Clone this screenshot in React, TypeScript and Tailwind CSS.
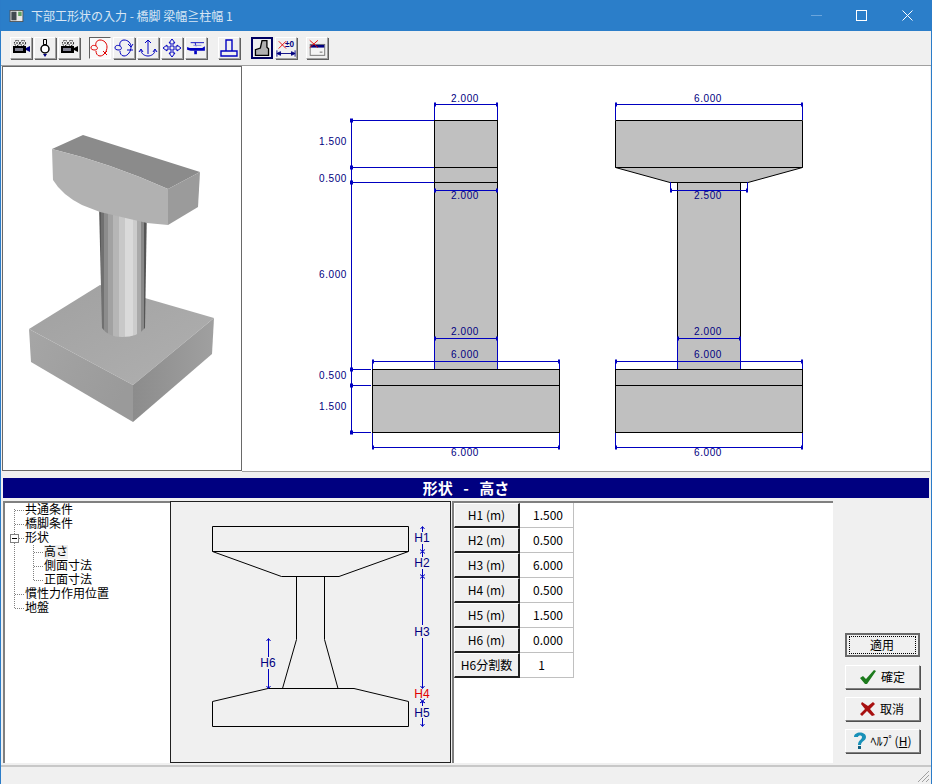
import type { ReactNode } from "react";

const BLUE = "#0000c0";
const NAVY = "#000080";

function Camera({ flip }: { flip?: boolean }) {
  return (
    <svg width="20" height="18" viewBox="0 0 20 18">
      <g fill="#000">
        <circle cx="6" cy="4" r="2.6" fill="none" stroke="#000" strokeDasharray="1.5 1" />
        <circle cx="12" cy="4" r="2.6" fill="none" stroke="#000" strokeDasharray="1.5 1" />
        <circle cx="6" cy="4" r="0.8" />
        <circle cx="12" cy="4" r="0.8" />
        <rect x="2" y="7" width="13" height="7" />
        <path d="M15 9l4-2v6l-4-2z" fill={flip ? "#000" : NAVY} />
      </g>
      <rect x="4" y="9" width="8" height="3" fill="#808090" />
    </svg>
  );
}

function Lens() {
  return (
    <svg width="14" height="20" viewBox="0 0 14 20">
      <path d="M5.5 1.5h3v5h-3z" fill="none" stroke="#000" />
      <circle cx="7" cy="11" r="4" fill="#fff" stroke="#000" strokeWidth="1.5" />
      <path d="M5 16h4l-2 3z" fill={NAVY} />
    </svg>
  );
}

function Rotate({ color, spin }: { color: string; spin?: boolean }) {
  return (
    <svg width="20" height="20" viewBox="0 0 20 20" fill="none" stroke={color}>
      <path d="M10 2c4 0 7 3 7 7 0 4-3 9-7 9-3 0-4-3-4-5" />
      <path d="M10 2C7 2 5 5 6 8" />
      {spin ? (
        <path d="M1 10c0-3 3-3 5-2s2 4-1 4-4-1-4-2zM13 13l4 4M17 13l-4 4" />
      ) : (
        <path d="M1 10c0-3 3-3 5-2s2 4-1 4-4-1-4-2zM14 6l3 3 2-3M13 12h6" />
      )}
    </svg>
  );
}

function Anchor() {
  return (
    <svg width="20" height="20" viewBox="0 0 20 20" fill="none" stroke={BLUE}>
      <path d="M10 2v14M7 5l3-3 3 3M3 12c0 4 4 6 7 6s7-2 7-6M1 14l2-3 2 3M15 14l2-3 2 3" />
    </svg>
  );
}

function Move() {
  return (
    <svg width="20" height="20" viewBox="0 0 20 20" fill="none" stroke={BLUE}>
      <path d="M10 1l3 4h-2v4h4V7l4 3-4 3v-2h-4v4h2l-3 4-3-4h2v-4H5v2l-4-3 4-3v2h4V5H7z" />
    </svg>
  );
}

function Plane() {
  return (
    <svg width="21" height="16" viewBox="0 0 22 18">
      <path d="M5 3h15M10 3l1 4" stroke={BLUE} fill="none" />
      <path d="M1 8l3 1h14l3-2v5H5l-4-1z" fill={BLUE} />
      <path d="M9 12h3v4H9z" fill={BLUE} />
      <path d="M8 6h9" stroke="#8080e0" />
    </svg>
  );
}

function Footing() {
  return (
    <svg width="20" height="20" viewBox="0 0 20 20" fill="none" stroke={BLUE} strokeWidth="1.4">
      <path d="M7 2h6v11H7zM2 13h16v5H2z" />
    </svg>
  );
}

function Elevation() {
  return (
    <svg width="18" height="18" viewBox="0 0 20 22">
      <path d="M10 2h6v8l2 2v8H2v-7l6-2z" fill="#b0b0b0" stroke="#000" strokeWidth="1.6" />
    </svg>
  );
}

function Dimension() {
  return (
    <svg width="21" height="21" viewBox="0 0 22 22" fill="none">
      <path d="M3 3l8 8M11 3l-8 8" stroke="#e00000" />
      <path d="M1 13v7M21 13v7M1 16.5h20M1 16.5l4-2v4zM21 16.5l-4-2v4z" stroke={NAVY} fill={NAVY} />
      <text x="10" y="9" fill={NAVY} stroke="none" fontSize="9" fontFamily="Liberation Sans, sans-serif" fontWeight="700">
        ±0
      </text>
    </svg>
  );
}

function WindowOff() {
  return (
    <svg width="20" height="19" viewBox="0 0 22 20" fill="none">
      <rect x="3.5" y="5.5" width="16" height="12" fill="#f4f4f4" stroke="#707070" />
      <rect x="4" y="6" width="15" height="3" fill={NAVY} />
      <path d="M3 1l9 8M12 1L3 9" stroke="#e00000" />
      <path d="M14 14h3" stroke="#606060" />
    </svg>
  );
}

function ToolButton({ pressed, dither, framed, children }: { pressed?: boolean; dither?: boolean; framed?: boolean; children: ReactNode }) {
  return (
    <div
      className={`mr-[2px] flex h-[22px] w-[22px] items-center justify-center ${
        framed
          ? "border-2 border-[#000060]"
          : pressed
            ? "border border-t-[#606060] border-l-[#606060] border-r-white border-b-white"
            : "border border-t-white border-l-white border-r-[#a0a0a0] border-b-[#a0a0a0] shadow-[1px_1px_0_#606060]"
      } ${dither ? "bg-[#fafafa]" : "bg-[#f0f0f0]"}`}
    >
      {children}
    </div>
  );
}

function Toolbar() {
  return (
    <div className="flex h-[34px] shrink-0 items-center bg-[#f0f0f0] pl-[9px]">
      <ToolButton><Camera /></ToolButton>
      <ToolButton><Lens /></ToolButton>
      <ToolButton><Camera flip /></ToolButton>
      <div className="w-[7px]" />
      <ToolButton pressed dither><Rotate color="#e00000" spin /></ToolButton>
      <ToolButton><Rotate color={BLUE} /></ToolButton>
      <ToolButton><Anchor /></ToolButton>
      <ToolButton><Move /></ToolButton>
      <ToolButton><Plane /></ToolButton>
      <div className="w-[9px]" />
      <ToolButton><Footing /></ToolButton>
      <div className="w-[9px]" />
      <ToolButton framed><Elevation /></ToolButton>
      <ToolButton><Dimension /></ToolButton>
      <div className="w-[7px]" />
      <ToolButton><WindowOff /></ToolButton>
    </div>
  );
}

function Model3D() {
  return (
    <svg className="block h-full w-full" viewBox="3 67 238 403">
      <defs>
        <linearGradient id="col" x1="0" y1="0" x2="1" y2="0">
          <stop offset="0" stopColor="#5a5a5a" />
          <stop offset="0.04" stopColor="#5a5a5a" />
          <stop offset="0.04" stopColor="#707070" />
          <stop offset="0.1" stopColor="#707070" />
          <stop offset="0.1" stopColor="#8c8c8c" />
          <stop offset="0.18" stopColor="#8c8c8c" />
          <stop offset="0.18" stopColor="#a2a2a2" />
          <stop offset="0.3" stopColor="#a2a2a2" />
          <stop offset="0.3" stopColor="#b6b6b6" />
          <stop offset="0.42" stopColor="#b6b6b6" />
          <stop offset="0.42" stopColor="#c8c8c8" />
          <stop offset="0.55" stopColor="#c8c8c8" />
          <stop offset="0.55" stopColor="#dadada" />
          <stop offset="0.7" stopColor="#dadada" />
          <stop offset="0.7" stopColor="#cccccc" />
          <stop offset="0.8" stopColor="#cccccc" />
          <stop offset="0.8" stopColor="#aaaaaa" />
          <stop offset="0.88" stopColor="#aaaaaa" />
          <stop offset="0.88" stopColor="#888888" />
          <stop offset="0.94" stopColor="#888888" />
          <stop offset="0.94" stopColor="#555555" />
          <stop offset="1" stopColor="#555555" />
        </linearGradient>
        <linearGradient id="footL" x1="0" y1="0" x2="1" y2="0.5">
          <stop offset="0" stopColor="#a6a6a6" />
          <stop offset="1" stopColor="#9a9a9a" />
        </linearGradient>
        <linearGradient id="footR" x1="0" y1="0" x2="1" y2="0">
          <stop offset="0" stopColor="#8c8c8c" />
          <stop offset="1" stopColor="#a0a0a0" />
        </linearGradient>
        <linearGradient id="footT" x1="0" y1="0" x2="1" y2="1">
          <stop offset="0" stopColor="#a0a0a0" />
          <stop offset="1" stopColor="#b0b0b0" />
        </linearGradient>
      </defs>
      <path d="M29 329L100 285L214 318L133 385z" fill="url(#footT)" />
      <path d="M29 329L133 385V422L31 362z" fill="url(#footL)" />
      <path d="M133 385L214 318L212 354L133 422z" fill="url(#footR)" />
      <path d="M99 205H147L145 328Q138 337 122 337Q108 337 102 328z" fill="url(#col)" />
      <path d="M52 149L83 135L200 172L168 189Q110 163 52 149z" fill="#8b8b8b" />
      <path d="M52 149Q110 163 168 189V225L147 223L100 212L82 205Q62 195 53 180z" fill="#b1b1b1" />
      <path d="M168 189L200 172L198 207L168 225z" fill="#9b9b9b" />
    </svg>
  );
}

function DimH({ x1, x2, y }: { x1: number; x2: number; y: number }) {
  return (
    <g stroke={BLUE} fill={BLUE}>
      <path d={`M${x1} ${y}H${x2}`} />
      <rect x={x1 - 0.5} y={y - 2} width="2" height="4" stroke="none" />
      <rect x={x2 - 1.5} y={y - 2} width="2" height="4" stroke="none" />
    </g>
  );
}

function DimLabel({ x, y, children }: { x: number; y: number; children: string }) {
  return (
    <text x={x} y={y} textAnchor="middle" fill={NAVY} fontSize="10" letterSpacing="0.6" fontFamily="Liberation Sans, sans-serif">
      {children}
    </text>
  );
}

function Drawings() {
  const leftDims = [120.5, 167.5, 182.5];
  const lowDims = [369.5, 385.5, 432.5];
  return (
    <svg className="block h-full w-full" viewBox="242 66 688 405">
      {/* side view */}
      <g stroke="#000" fill="#c0c0c0">
        <rect x="434.5" y="120.5" width="63" height="249" />
        <rect x="372.5" y="369.5" width="187" height="63" />
        <path d="M434.5 167.5H497.5M434.5 182.5H497.5M372.5 385.5H559.5" fill="none" />
      </g>
      <g stroke={BLUE} fill="none">
        <path d="M351.5 120.5V432.5M434.5 104V120M497.5 104V120M434.5 338V369M497.5 338V369M372.5 361V369M559.5 361V369M372.5 433V447M559.5 433V447" />
        {leftDims.map((y) => (
          <path key={y} d={`M350 ${y}H434`} />
        ))}
        {lowDims.map((y) => (
          <path key={y} d={`M350 ${y}H371`} />
        ))}
      </g>
      {[120.5, 167.5, 182.5, 369.5, 385.5, 432.5].map((y) => (
        <rect key={y} x="350" y={y - 2} width="3" height="4" fill={BLUE} />
      ))}
      <DimH x1={434.5} x2={497.5} y={104.5} />
      <DimH x1={434.5} x2={497.5} y={190.5} />
      <DimH x1={434.5} x2={497.5} y={338.5} />
      <DimH x1={372.5} x2={559.5} y={361.5} />
      <DimH x1={372.5} x2={559.5} y={447.5} />
      <DimLabel x={465} y={102}>2.000</DimLabel>
      <DimLabel x={465} y={199}>2.000</DimLabel>
      <DimLabel x={465} y={335}>2.000</DimLabel>
      <DimLabel x={465} y={358}>6.000</DimLabel>
      <DimLabel x={465} y={456}>6.000</DimLabel>
      <DimLabel x={333} y={145}>1.500</DimLabel>
      <DimLabel x={333} y={182}>0.500</DimLabel>
      <DimLabel x={333} y={278}>6.000</DimLabel>
      <DimLabel x={333} y={379}>0.500</DimLabel>
      <DimLabel x={333} y={410}>1.500</DimLabel>

      {/* front view */}
      <g stroke="#000" fill="#c0c0c0">
        <rect x="677.5" y="182.5" width="63" height="187" />
        <path d="M615.5 120.5H802.5V167.5L748 182.5H670L615.5 167.5z" />
        <rect x="615.5" y="369.5" width="187" height="63" />
        <path d="M615.5 167.5H802.5M670 182.5H748M615.5 385.5H802.5" fill="none" />
      </g>
      <g stroke={BLUE} fill="none">
        <path d="M615.5 104V120M802.5 104V120M670.5 182V190M747.5 182V190M677.5 338V369M740.5 338V369M615.5 361V369M802.5 361V369M615.5 433V447M802.5 433V447" />
      </g>
      <DimH x1={615.5} x2={802.5} y={104.5} />
      <DimH x1={670.5} x2={747.5} y={190.5} />
      <DimH x1={677.5} x2={740.5} y={338.5} />
      <DimH x1={615.5} x2={802.5} y={361.5} />
      <DimH x1={615.5} x2={802.5} y={447.5} />
      <DimLabel x={708} y={102}>6.000</DimLabel>
      <DimLabel x={708} y={199}>2.500</DimLabel>
      <DimLabel x={708} y={335}>2.000</DimLabel>
      <DimLabel x={708} y={358}>6.000</DimLabel>
      <DimLabel x={708} y={456}>6.000</DimLabel>
    </svg>
  );
}

function HLabel({ x, y, red, children }: { x: number; y: number; red?: boolean; children: string }) {
  return (
    <text x={x} y={y} textAnchor="middle" fill={red ? "#e00000" : NAVY} fontSize="12" fontFamily="Liberation Sans, sans-serif">
      {children}
    </text>
  );
}

function Schematic() {
  return (
    <svg className="block h-full w-full" viewBox="171 502 279 260">
      <g stroke="#000" fill="none">
        <path d="M212.5 526.5H408.5V551.5L339 576.5H281.5L212.5 551.5zM212.5 551.5H408.5" />
        <path d="M296.5 576.5V639.5L282.5 688.5M324.5 576.5V639.5L338 688.5" />
        <path d="M268 688.5H354L408.5 701.5V726.5H212.5V701.5z" />
      </g>
      <g stroke={BLUE} fill="none">
        <path d="M422.5 527V532M422.5 544V557M422.5 569V625M422.5 638V688M422.5 702V706M422.5 718V726" />
        <path d="M420.5 529L422.5 526.5L424.5 529M420 549.5L425 553.5M425 549.5L420 553.5M420 574.5L425 578.5M425 574.5L420 578.5" />
        <path d="M420.5 686L422.5 688.5L424.5 686M420.5 703L422.5 701L424.5 703M420 699L425 703M425 699L420 703M420.5 724L422.5 726.5L424.5 724" />
        <path d="M268.5 639V657M268.5 669V688M266.5 641L268.5 638.5L270.5 641M266.5 686L268.5 688.5L270.5 686" />
      </g>
      <rect x="414" y="532" width="17" height="12" fill="#f0f0f0" />
      <rect x="414" y="557" width="17" height="12" fill="#f0f0f0" />
      <HLabel x={422} y={542}>H1</HLabel>
      <HLabel x={422} y={567}>H2</HLabel>
      <HLabel x={422} y={636}>H3</HLabel>
      <HLabel x={422} y={698} red>H4</HLabel>
      <HLabel x={422} y={717}>H5</HLabel>
      <HLabel x={268} y={667}>H6</HLabel>
    </svg>
  );
}

const treeItems = [
  { label: "共通条件", level: 0 },
  { label: "橋脚条件", level: 0 },
  { label: "形状", level: 0, open: true },
  { label: "高さ", level: 1, selected: true },
  { label: "側面寸法", level: 1 },
  { label: "正面寸法", level: 1 },
  { label: "慣性力作用位置", level: 0 },
  { label: "地盤", level: 0 },
];

function Tree() {
  return (
    <div className="relative w-[167px] shrink-0 border-t-2 border-l-2 border-t-[#808080] border-l-[#808080] bg-white font-['Liberation_Sans','Noto_Sans_CJK_JP',sans-serif] text-[12px] leading-[14px] text-black">
      <span className="absolute top-[6px] left-[9px] h-[99px] border-l border-dotted border-[#808080]" />
      <span className="absolute top-[42px] left-[28px] h-[35px] border-l border-dotted border-[#808080]" />
      <div>
        {treeItems.map((item) => (
          <div key={item.label} className={`relative flex h-[14px] items-center ${item.level === 1 ? "pl-[29px]" : "pl-[10px]"}`}>
            {item.open ? (
              <>
                <span className="ml-[-5px] flex h-[9px] w-[9px] items-center justify-center border border-[#808080] bg-white">
                  <span className="h-[1px] w-[5px] bg-black" />
                </span>
                <span className="w-[5px] border-t border-dotted border-[#808080]" />
              </>
            ) : (
              <span className="w-[9px] border-t border-dotted border-[#808080]" />
            )}
            <span className={`ml-[1px] whitespace-nowrap ${item.selected ? "bg-[#f0f0f0]" : ""}`}>{item.label}</span>
          </div>
        ))}
      </div>
    </div>
  );
}

const rows = [
  { name: "H1 (m)", value: "1.500" },
  { name: "H2 (m)", value: "0.500" },
  { name: "H3 (m)", value: "6.000" },
  { name: "H4 (m)", value: "0.500" },
  { name: "H5 (m)", value: "1.500" },
  { name: "H6 (m)", value: "0.000" },
  { name: "H6分割数", value: "1" },
];

function Grid() {
  return (
    <div className="w-[381px] shrink-0 border-t-2 border-l-2 border-t-[#808080] border-l-[#808080] bg-white">
      {rows.map((row) => (
        <div key={row.name} className="flex h-[25px] w-[120px] text-[12px] text-black">
          <div className="flex w-[66px] items-center justify-center border-t border-l border-t-white border-l-white border-r-2 border-b-2 border-r-[#202020] border-b-[#202020] bg-[#f0f0f0]">
            {row.name}
          </div>
          <div
            className={`flex w-[54px] items-center border-r border-b border-[#c0c0c0] ${
              row.value === "1" ? "justify-center pr-[10px]" : "justify-end pr-[10px]"
            }`}
          >
            {row.value}
          </div>
        </div>
      ))}
    </div>
  );
}

function ActionButton({ icon, label, focus }: { icon?: ReactNode; label: ReactNode; focus?: boolean }) {
  return (
    <div
      className={`flex h-6 w-[75px] items-center justify-center gap-1 bg-[#f0f0f0] text-[12px] text-black ${
        focus
          ? "border-2 border-[#696969]"
          : "border border-t-white border-l-white border-r-[#808080] border-b-[#808080] shadow-[1px_1px_0_#505050]"
      }`}
    >
      {focus ? (
        <span className="flex h-[18px] w-[67px] items-center justify-center border border-dotted border-black">{label}</span>
      ) : (
        <>
          {icon}
          <span className="whitespace-nowrap">{label}</span>
        </>
      )}
    </div>
  );
}

function Buttons() {
  return (
    <div className="flex flex-1 flex-col items-center gap-2 pt-[132px]">
      <ActionButton label="適用" focus />
      <ActionButton
        label="確定"
        icon={
          <svg width="18" height="16" viewBox="0 0 18 16">
            <path d="M1 9l3-2 3 3 8-9 2 1-9 13H6z" fill="#1c7a1c" />
          </svg>
        }
      />
      <ActionButton
        label="取消"
        icon={
          <svg width="16" height="16" viewBox="0 0 16 16">
            <path d="M2 1l6 4 5-4 2 2-5 5 5 6-3 1-5-5-5 5-2-2 5-5-4-5z" fill="#a81010" />
          </svg>
        }
      />
      <ActionButton
        label={
          <>
            ﾍﾙﾌﾟ(<span className="underline">H</span>)
          </>
        }
        icon={
          <svg width="14" height="18" viewBox="0 0 14 18">
            <path d="M1 5c0-6 12-6 12 0 0 4-5 4-5 8H5c0-5 4-5 4-8 0-2-4-2-4 0z" fill="#1890b8" />
            <rect x="5" y="14" width="3" height="3" fill="#106080" />
          </svg>
        }
      />
    </div>
  );
}

export default function App() {
  return (
    <div
      className="flex h-[784px] w-[932px] flex-col overflow-hidden border-x border-x-[#2b7cc8] bg-[#f0f0f0]"
      style={{ fontFamily: '"Noto Sans CJK JP", "Liberation Sans", sans-serif' }}
    >
      <div className="flex h-[31px] shrink-0 items-center bg-[#2b7ec9] pl-[8px] text-[12px] text-[#d8e6f4]">
        <svg width="15" height="12" viewBox="0 0 16 14" className="mr-[7px]">
          <rect x="0.5" y="0.5" width="15" height="13" fill="#e8e8e8" stroke="#505050" />
          <rect x="2" y="2" width="6" height="10" fill="#404850" />
          <rect x="10" y="2" width="4" height="5" fill="#60a060" />
        </svg>
        <span className="whitespace-nowrap">下部工形状の入力 - 橋脚 梁幅≧柱幅 1</span>
        <div className="ml-auto flex items-center">
          <div className="mr-[34px] h-[1px] w-[11px] bg-[#6aa5dc]" />
          <div className="mr-[35px] h-[11px] w-[11px] border border-white" />
          <svg width="11" height="11" viewBox="0 0 11 11" className="mr-[18px]" fill="none" stroke="#fff">
            <path d="M0.5 0.5l10 10M10.5 0.5l-10 10" />
          </svg>
        </div>
      </div>

      <Toolbar />

      <div className="flex h-[407px] shrink-0 border-t border-t-[#a0a0a0] bg-[#f0f0f0] px-[1px]">
        <div className="h-[405px] w-[240px] shrink-0 border border-[#696969] bg-white">
          <Model3D />
        </div>
        <div className="h-[406px] flex-1 border-b border-b-[#a0a0a0] bg-white">
          <Drawings />
        </div>
      </div>

      <div className="mx-[2px] mt-[6px] flex h-[20px] shrink-0 items-center justify-center bg-[#000080] text-[15px] font-bold text-white [word-spacing:7px]">
        形状 - 高さ
      </div>

      <div className="mt-[3px] ml-[2px] flex h-[262px] shrink-0">
        <Tree />
        <div className="h-[262px] w-[281px] shrink-0 border border-[#202020] bg-[#f0f0f0]">
          <Schematic />
        </div>
        <div className="w-[1px]" />
        <Grid />
        <Buttons />
      </div>

      <div className="relative mt-auto h-[19px] border-t-2 border-t-[#c8c8c8] bg-[#f0f0f0]">
        <svg width="14" height="14" viewBox="0 0 14 14" className="absolute right-[1px] bottom-[1px]" stroke="#a0a0a0">
          <path d="M13 2L2 13M13 6L6 13M13 10L10 13" />
        </svg>
      </div>
    </div>
  );
}
